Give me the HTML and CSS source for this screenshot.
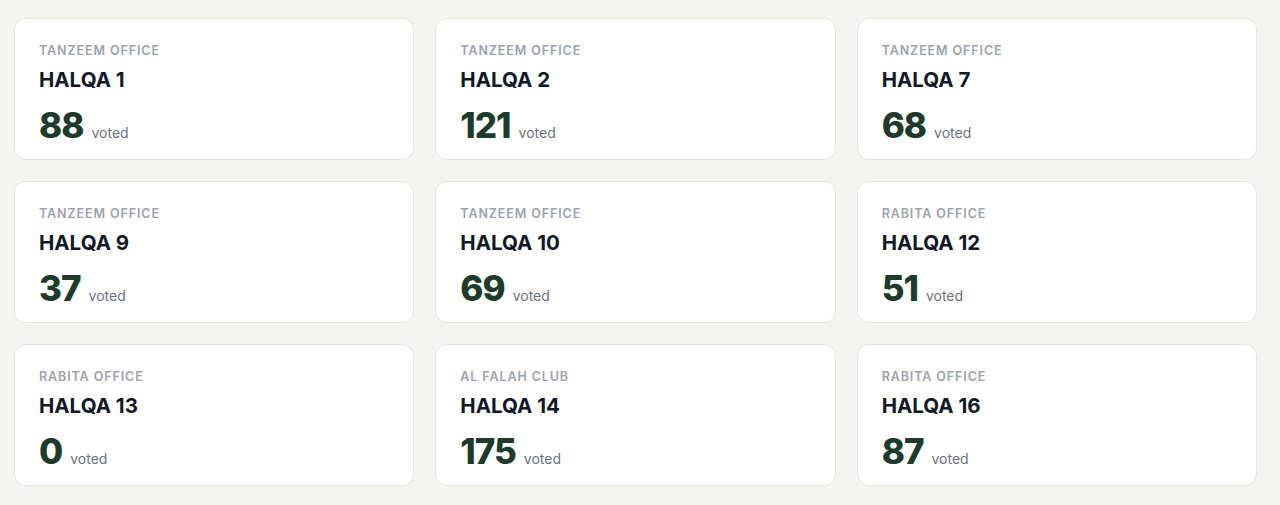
FILE: index.html
```html
<!DOCTYPE html>
<html lang="en">
<head>
    <meta charset="UTF-8">
    <meta name="viewport" content="width=device-width, initial-scale=1.0">
    <title>Halqa turnout</title>
    <link rel="stylesheet" href="styles.css">
</head>
<body>

    <div class="halqa-grid">
        <div class="halqa-card">
            <div class="office">TANZEEM OFFICE</div>
            <div class="halqa-name">HALQA 1</div>
            <div class="count"><span class="count-num">88</span><span class="count-label">voted</span></div>
        </div>
        <div class="halqa-card">
            <div class="office">TANZEEM OFFICE</div>
            <div class="halqa-name">HALQA 2</div>
            <div class="count"><span class="count-num">121</span><span class="count-label">voted</span></div>
        </div>
        <div class="halqa-card">
            <div class="office">TANZEEM OFFICE</div>
            <div class="halqa-name">HALQA 7</div>
            <div class="count"><span class="count-num">68</span><span class="count-label">voted</span></div>
        </div>
        <div class="halqa-card">
            <div class="office">TANZEEM OFFICE</div>
            <div class="halqa-name">HALQA 9</div>
            <div class="count"><span class="count-num">37</span><span class="count-label">voted</span></div>
        </div>
        <div class="halqa-card">
            <div class="office">TANZEEM OFFICE</div>
            <div class="halqa-name">HALQA 10</div>
            <div class="count"><span class="count-num">69</span><span class="count-label">voted</span></div>
        </div>
        <div class="halqa-card">
            <div class="office">RABITA OFFICE</div>
            <div class="halqa-name">HALQA 12</div>
            <div class="count"><span class="count-num">51</span><span class="count-label">voted</span></div>
        </div>
        <div class="halqa-card">
            <div class="office">RABITA OFFICE</div>
            <div class="halqa-name">HALQA 13</div>
            <div class="count"><span class="count-num">0</span><span class="count-label">voted</span></div>
        </div>
        <div class="halqa-card">
            <div class="office">AL FALAH CLUB</div>
            <div class="halqa-name">HALQA 14</div>
            <div class="count"><span class="count-num">175</span><span class="count-label">voted</span></div>
        </div>
        <div class="halqa-card">
            <div class="office">RABITA OFFICE</div>
            <div class="halqa-name">HALQA 16</div>
            <div class="count"><span class="count-num">87</span><span class="count-label">voted</span></div>
        </div>
    </div>

</body>
</html>
```

FILE: styles.css
```css
body {
    font-family: Inter, "Noto Sans", Arial, sans-serif;
    margin: 0;
    background-color: #f4f4f0;
    color: #111827;
}

.halqa-grid {
    display: grid;
    grid-template-columns: repeat(3, 1fr);
    gap: 21px;
    padding: 18px 23px 19px 14px;
}

.halqa-card {
    background-color: #fff;
    border: 1px solid #e6e6e1;
    border-radius: 12px;
    padding: 24px 24px 12px;
    height: 142px;
    box-sizing: border-box;
}

.office {
    font-size: 12.5px;
    line-height: 16px;
    font-weight: 600;
    letter-spacing: 0.9px;
    color: #9ca3af;
}

.halqa-name {
    margin-top: 7px;
    font-size: 20.5px;
    line-height: 28px;
    font-weight: 700;
    letter-spacing: 0;
    color: #111827;
}

.count {
    margin-top: 11px;
    display: flex;
    align-items: baseline;
    gap: 8px;
}

.count-num {
    font-size: 35px;
    line-height: 40px;
    font-weight: 800;
    letter-spacing: -1px;
    color: #1c3b2a;
}

.count-label {
    font-size: 14px;
    color: #6b7280;
}
```
